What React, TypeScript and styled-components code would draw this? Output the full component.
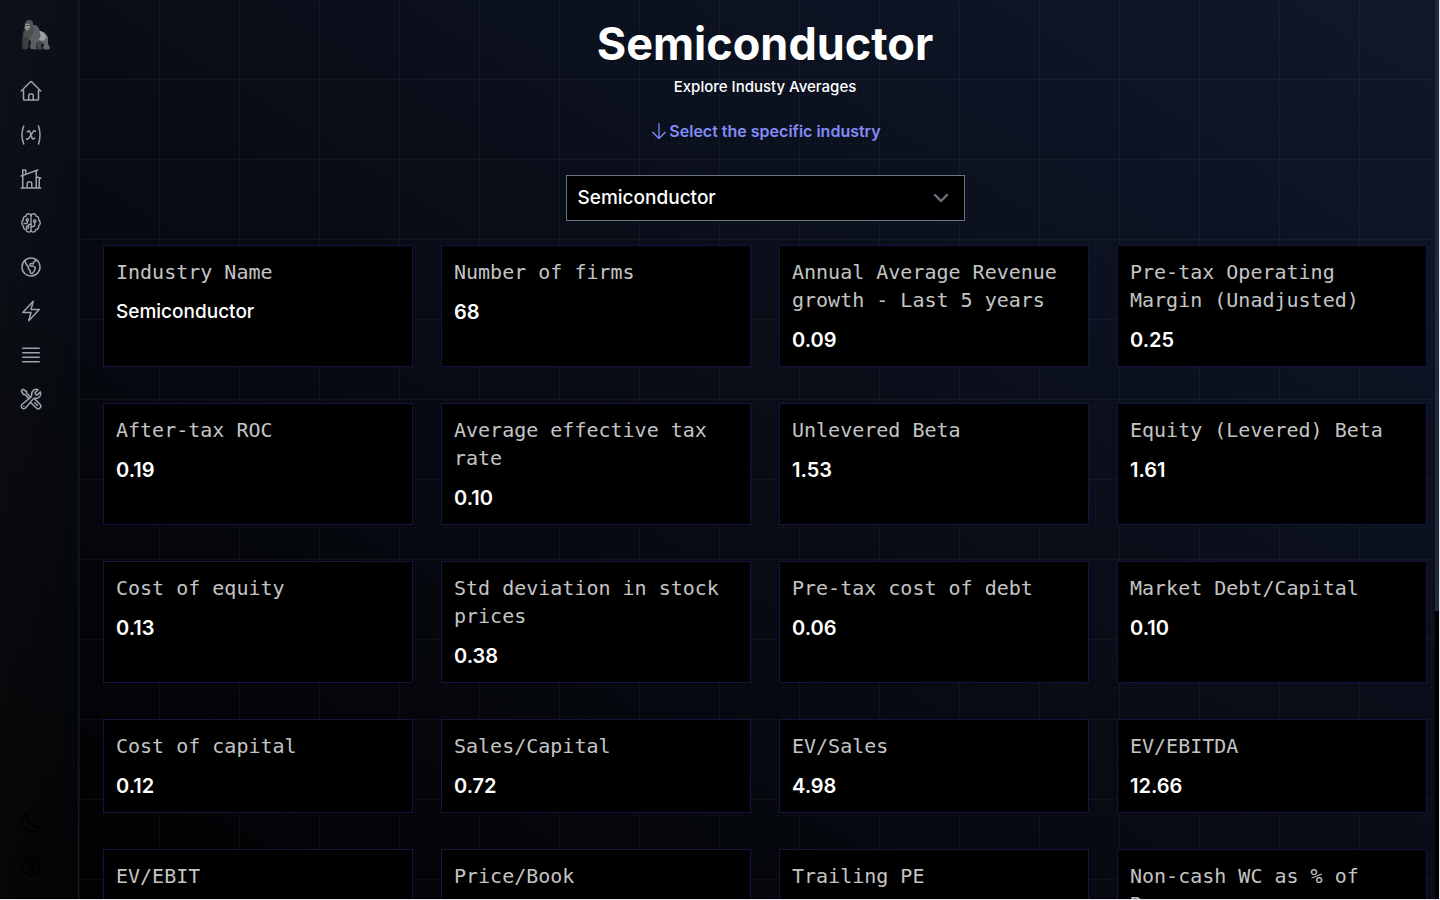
import React from 'react';
import styled, { createGlobalStyle } from 'styled-components';
import {
  HiOutlineArrowDown,
  HiOutlineBars4,
  HiOutlineBolt,
  HiOutlineGlobeAmericas,
  HiOutlineHome,
  HiOutlineHomeModern,
  HiOutlineMoon,
  HiOutlineUserCircle,
  HiOutlineVariable,
  HiOutlineWrenchScrewdriver,
} from 'react-icons/hi2';

const GlobalStyle = createGlobalStyle`
  *, *::before, *::after { box-sizing: border-box; }
  body {
    margin: 0;
    background: #e6e4ec;
    color: #fff;
    font-family: Inter, 'Liberation Sans', sans-serif;
    font-size: 16px;
    line-height: 24px;
    overflow: hidden;
  }
  h1, h2, p, dl, dt, dd, ul { margin: 0; padding: 0; }
  ul { list-style: none; }
`;

const Shell = styled.div`
  display: grid;
  grid-template-columns: 79px minmax(0, 1fr) 4px;
  height: calc(100vh - 1px);
  margin-right: 1px;
  background: linear-gradient(to top right, #000, #0f172a);
`;

const Sidebar = styled.aside`
  display: flex;
  flex-direction: column;
  justify-content: space-between;
  padding: 18px 19px 20px;
  border-right: 1px solid #111a2c;
  background: linear-gradient(to right, rgba(255, 255, 255, 0.025), rgba(255, 255, 255, 0.01));
`;

const NavList = styled.ul`
  display: flex;
  flex-direction: column;
  gap: 20px;
`;

const Brand = styled.a`
  display: block;
  height: 34px;
  margin-bottom: 27px;
`;

const NavLink = styled.a`
  display: block;
  width: 24px;
  height: 24px;
  color: #9ca3af;
  svg { display: block; width: 24px; height: 24px; }
`;

const FootButton = styled.button`
  display: block;
  padding: 0;
  border: 0;
  background: none;
  color: #000;
  svg { display: block; width: 24px; height: 24px; }
`;

const Main = styled.main`
  display: flex;
  flex-direction: column;
  align-items: center;
  overflow: hidden;
  padding: 20px 8px 0 24px;
  background-image:
    linear-gradient(to right, transparent 79px, rgba(255, 255, 255, 0.025) 79px),
    linear-gradient(to bottom, transparent 79px, rgba(255, 255, 255, 0.025) 79px),
    linear-gradient(to right, transparent 7px, rgba(255, 255, 255, 0.012) 7px),
    linear-gradient(to bottom, transparent 7px, rgba(255, 255, 255, 0.012) 7px);
  background-size: 80px 80px, 80px 80px, 8px 8px, 8px 8px;
  background-attachment: fixed;
`;

const Title = styled.h1`
  font-size: 45px;
  line-height: 48px;
  font-weight: 700;
`;

const Subtitle = styled.p`
  margin-top: 7px;
  font-size: 15px;
  font-weight: 500;
`;

const Hint = styled.label`
  display: flex;
  align-items: center;
  margin: 20px 0 32px;
  color: #818cf8;
  font-weight: 600;
`;

const SelectFrame = styled.div`
  display: grid;
  align-items: center;
  width: 399px;
  max-width: 100%;
  margin-bottom: 24px;
  > * { grid-area: 1 / 1; }
  svg { justify-self: end; margin-right: 12px; pointer-events: none; }
`;

const Select = styled.select`
  appearance: none;
  width: 100%;
  height: 46px;
  padding: 0 11px;
  border: 1px solid #6b7280;
  border-radius: 0;
  background: #000;
  color: #fff;
  font: 500 19px/28px Inter, sans-serif;
`;

const Metrics = styled.dl`
  display: grid;
  grid-template-columns: repeat(4, minmax(0, 1fr));
  gap: 36px 28px;
  width: 100%;
`;

const Card = styled.div`
  display: flex;
  flex-direction: column;
  gap: 12px;
  padding: 12px;
  border: 1px solid #17123f;
  background: #000;
  font-size: 20px;
  line-height: 28px;
`;

const CardTitle = styled.dt`
  color: #c4c4c4;
  font-family: 'DejaVu Sans Mono', monospace;
`;

const CardValue = styled.dd<{ $text?: boolean }>`
  font-size: ${(p) => (p.$text ? 19 : 20)}px;
  font-weight: ${(p) => (p.$text ? 500 : 600)};
`;

const ScrollTrack = styled.div`
  background: #000;
`;

const ScrollThumb = styled.div`
  height: 68%;
  background: #1e293b;
`;

const Gorilla = () => (
  <svg width="32" height="34" viewBox="0 0 32 34" aria-hidden="true">
    <path d="M19 13l6 1 4 5v7l2 4-1 1.500h-5l-1-2 1-3-3-3-4 1z" fill="#66686a" />
    <path d="M19 12c4 1 7 3 8.500 7-1 3-4 4.500-8 4z" fill="#a0a0a0" />
    <path d="M17 24l4-2 2.500 3-1.500 3 1.500 2-.5 1.500h-4l-1-2z" fill="#45484a" />
    <path d="M4.500 13c-1.500 5-1.500 9-1 13l-.5 3.500c.5 2 2 2 5 1.800l1.500-2.300.5-6 3-5-3-6z" fill="#3c3f41" />
    <path d="M13 7.500c4-1.500 6.500.5 7.500 4.500l1 7-4 6-.5 3.500 1 2.800h-6l-1-2.500 1-5-3-4-3-6 4-3z" fill="#5b5e60" />
    <path d="M4.500 13l4-1.500 5-4 2 3-2 6-4 4-4.500-2z" fill="#4b4e50" />
    <path d="M6 8C5.500 4 7 2 10.500 2 13 2 14.500 4 14.300 7L13 11.500 9 13.500 6 12.500z" fill="#505355" />
    <path d="M6 6.500l4-1 1 1.500-.5 3-2 2.500L6 12l-.5-2.500z" fill="#a09f9e" />
    <path d="M6 7.800l4.500-.8v.8L6 8.600zM6 11l3-.6v.6l-3 .6z" fill="#2a2c2e" />
  </svg>
);

const BrainCircuit = () => (
  <svg viewBox="0 0 24 24" fill="none" stroke="currentColor" strokeWidth="1.4" strokeLinecap="round" strokeLinejoin="round" aria-hidden="true">
    <path d="M12 4.500v15.500" />
    <path d="M12 4.600C11.200 2.100 7.400 2.100 6.900 5.200 4.600 5.100 3.900 7.400 4.400 9 2.200 10.100 2.200 13.800 4.400 14.800 4 17 5.200 18.500 7 18.400 7.600 21.600 11 21.800 12 19.800" />
    <path d="M12 4.600C12.800 2.100 16.600 2.100 17.100 5.200 19.400 5.100 20.100 7.400 19.600 9 21.800 10.100 21.800 13.800 19.600 14.800 20 17 18.800 18.500 17 18.400 16.400 21.600 13 21.800 12 19.800" />
    <circle cx="8.300" cy="8.800" r="1.200" />
    <path d="M8.300 10v1.500c0 .7-.5 1-1 1H5M12 13.500H9.500l-.8 1.500" />
    <circle cx="8.500" cy="16.200" r="1.200" />
    <path d="M12 15.500h2.200c1 0 1.500-.5 1.500-1.500v-2.600" />
    <circle cx="15.700" cy="10.200" r="1.200" />
  </svg>
);

const navItems = [
  { label: 'Home', icon: HiOutlineHome },
  { label: 'Formulas', icon: HiOutlineVariable },
  { label: 'Industries', icon: HiOutlineHomeModern },
  { label: 'Insights', icon: BrainCircuit },
  { label: 'World', icon: HiOutlineGlobeAmericas },
  { label: 'Quick access', icon: HiOutlineBolt },
  { label: 'Lists', icon: HiOutlineBars4 },
  { label: 'Tools', icon: HiOutlineWrenchScrewdriver },
];

const footItems = [
  { label: 'Dark mode', icon: HiOutlineMoon },
  { label: 'Account', icon: HiOutlineUserCircle },
];

const metrics: [string, string][] = [
  ['Industry Name', 'Semiconductor'],
  ['Number of firms', '68'],
  ['Annual Average Revenue growth - Last 5 years', '0.09'],
  ['Pre-tax Operating Margin (Unadjusted)', '0.25'],
  ['After-tax ROC', '0.19'],
  ['Average effective tax rate', '0.10'],
  ['Unlevered Beta', '1.53'],
  ['Equity (Levered) Beta', '1.61'],
  ['Cost of equity', '0.13'],
  ['Std deviation in stock prices', '0.38'],
  ['Pre-tax cost of debt', '0.06'],
  ['Market Debt/Capital', '0.10'],
  ['Cost of capital', '0.12'],
  ['Sales/Capital', '0.72'],
  ['EV/Sales', '4.98'],
  ['EV/EBITDA', '12.66'],
  ['EV/EBIT', ''],
  ['Price/Book', ''],
  ['Trailing PE', ''],
  ['Non-cash WC as % of Revenues', ''],
];

export default function App() {
  return (
    <>
      <GlobalStyle />
      <Shell>
        <Sidebar>
          <nav>
            <Brand href="#" aria-label="Start page">
              <Gorilla />
            </Brand>
            <NavList>
              {navItems.map(({ label, icon: Icon }) => (
                <li key={label}>
                  <NavLink href="#" aria-label={label}>
                    <Icon />
                  </NavLink>
                </li>
              ))}
            </NavList>
          </nav>
          <NavList>
            {footItems.map(({ label, icon: Icon }) => (
              <li key={label}>
                <FootButton type="button" aria-label={label}>
                  <Icon />
                </FootButton>
              </li>
            ))}
          </NavList>
        </Sidebar>
        <Main>
          <Title>Semiconductor</Title>
          <Subtitle>Explore Industy Averages</Subtitle>
          <Hint htmlFor="industry">
            <HiOutlineArrowDown size={20} aria-hidden="true" />
            Select the specific industry
          </Hint>
          <SelectFrame>
            <Select id="industry" defaultValue="Semiconductor">
              <option>Semiconductor</option>
            </Select>
            <svg width="24" height="24" viewBox="0 0 20 20" fill="none" stroke="#6b7280" strokeWidth="2" strokeLinecap="round" strokeLinejoin="round" aria-hidden="true">
              <path d="M5 7.500l5 5 5-5" />
            </svg>
          </SelectFrame>
          <Metrics>
            {metrics.map(([name, value]) => (
              <Card key={name}>
                <CardTitle>{name}</CardTitle>
                <CardValue $text={value === 'Semiconductor'}>{value}</CardValue>
              </Card>
            ))}
          </Metrics>
        </Main>
        <ScrollTrack>
          <ScrollThumb />
        </ScrollTrack>
      </Shell>
    </>
  );
}
